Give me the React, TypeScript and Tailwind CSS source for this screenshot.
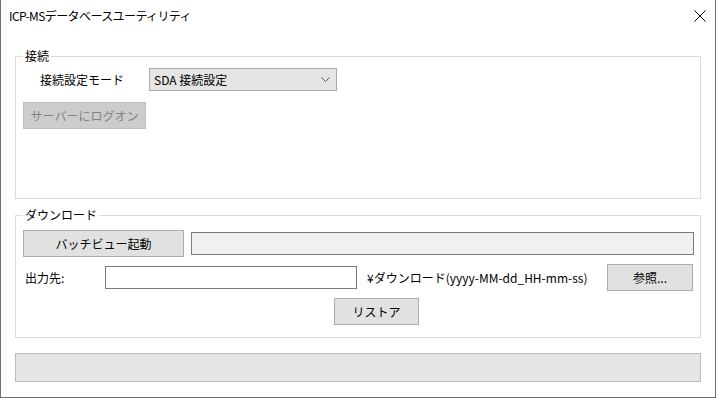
import type { ReactNode } from "react";

const font = {
  fontFamily: '"Noto Sans CJK JP", "Noto Sans", sans-serif',
};

function GroupBox({ label, className, children }: { label: string; className: string; children: ReactNode }) {
  return (
    <div className={`relative border border-[#dcdcdc] ${className}`}>
      <span className="absolute -top-[9px] left-[7px] bg-white px-[2px] leading-[16px]">{label}</span>
      {children}
    </div>
  );
}

function Button({ children, className }: { children: ReactNode; className: string }) {
  return (
    <div className={`flex h-[27px] items-center justify-center border border-[#adadad] bg-[#e1e1e1] ${className}`}>
      {children}
    </div>
  );
}

export default function App() {
  return (
    <div
      className="flex h-[398px] w-[716px] flex-col border-x border-b border-[#6e6e6e] bg-white text-[12px] text-black"
      style={font}
    >
      {/* Title bar */}
      <div className="flex h-[31px] shrink-0 items-center justify-between pl-[8px] pr-[9px]">
        <span className="text-[12px] tracking-[-0.6px]">ICP-MSデータベースユーティリティ</span>
        <svg width="12" height="12" viewBox="0 0 12 12" className="mt-[1px]">
          <path d="M0.5 0.5 L11.5 11.5 M11.5 0.5 L0.5 11.5" stroke="#000" strokeWidth="1" />
        </svg>
      </div>

      <div className="flex flex-col px-[14px] pt-[25px]">
        {/* 接続 */}
        <GroupBox label="接続" className="h-[143px] pt-[11px]">
          <div className="flex items-center">
            <span className="w-[133px] pl-[24px]">接続設定モード</span>
            <div className="flex h-[23px] w-[188px] items-center justify-between border border-[#acacac] bg-[#e5e5e5] pl-[4px] pr-[6px]">
              <span>SDA 接続設定</span>
              <svg width="9" height="6" viewBox="0 0 9 6">
                <path d="M0.5 0.5 L4.5 4.5 L8.5 0.5" fill="none" stroke="#555" strokeWidth="1" />
              </svg>
            </div>
          </div>
          <div className="ml-[7px] mt-[11px] flex h-[27px] w-[123px] items-center justify-center border border-[#bfbfbf] bg-[#cccccc] text-[#838383]">
            サーバーにログオン
          </div>
        </GroupBox>

        {/* ダウンロード */}
        <GroupBox label="ダウンロード" className="mt-[16px] h-[123px] pl-[7px] pr-[6px] pt-[14px]">
          <div className="flex items-center gap-[7px]">
            <Button className="w-[161px]">バッチビュー起動</Button>
            <div className="h-[23px] flex-1 border border-[#7a7a7a] bg-[#f0f0f0]" />
          </div>
          <div className="mt-[7px] flex items-center">
            <span className="w-[82px] pl-[2px]">出力先:</span>
            <div className="h-[23px] w-[252px] border border-[#7a7a7a] bg-white" />
            <span className="ml-[10px] flex-1">¥ダウンロード(yyyy-MM-dd_HH-mm-ss)</span>
            <Button className="mr-[1px] w-[86px]">参照...</Button>
          </div>
          <div className="mt-[7px] flex">
            <Button className="ml-[311px] w-[85px]">リストア</Button>
          </div>
        </GroupBox>

        {/* status bar */}
        <div className="mt-[15px] h-[29px] border border-[#bcbcbc] bg-[#e6e6e6]" />
      </div>
    </div>
  );
}
